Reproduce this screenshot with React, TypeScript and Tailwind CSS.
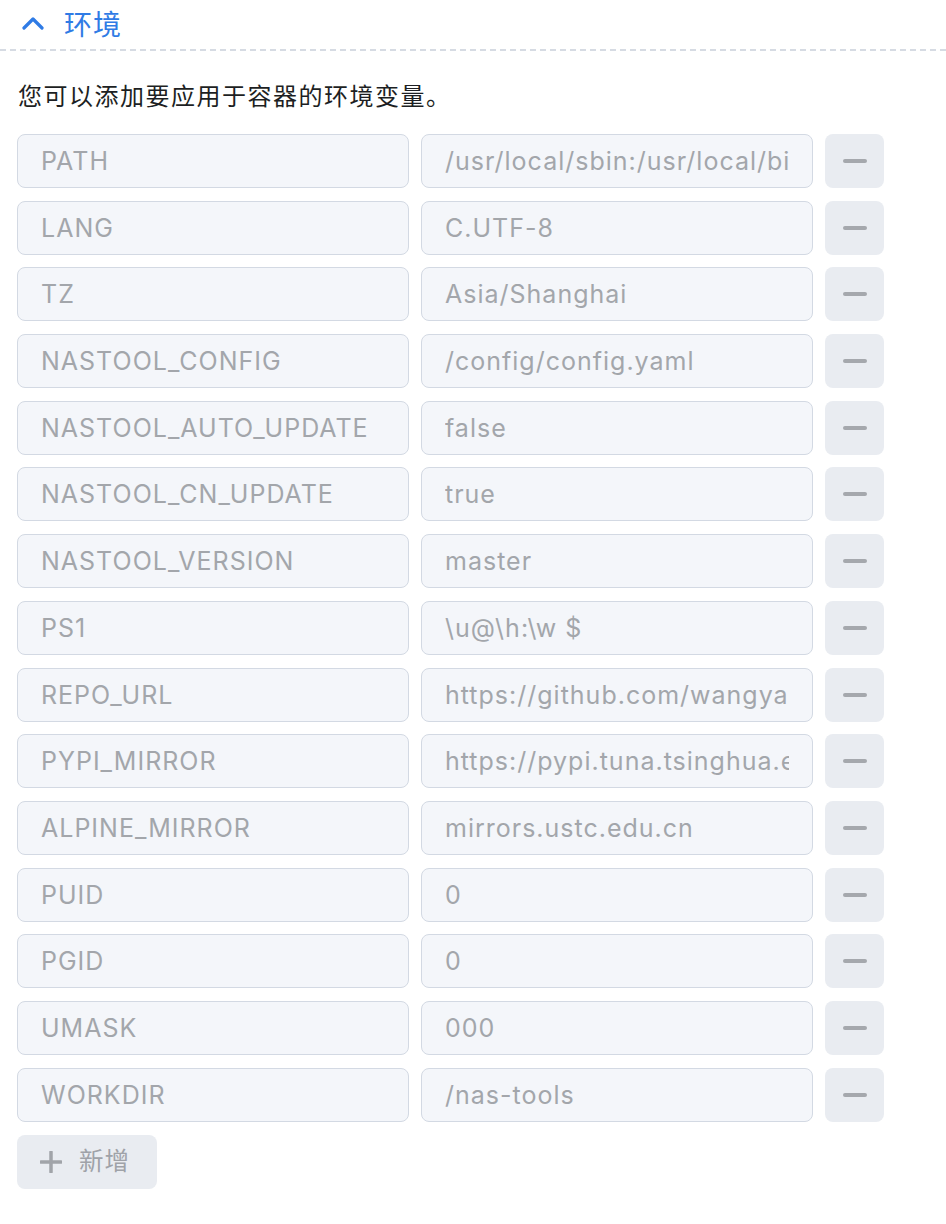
import type { FC } from 'react';

const envVars: [string, string][] = [
  ['PATH', '/usr/local/sbin:/usr/local/bin:/usr/sbin:/usr/bin:/sbin:/bin'],
  ['LANG', 'C.UTF-8'],
  ['TZ', 'Asia/Shanghai'],
  ['NASTOOL_CONFIG', '/config/config.yaml'],
  ['NASTOOL_AUTO_UPDATE', 'false'],
  ['NASTOOL_CN_UPDATE', 'true'],
  ['NASTOOL_VERSION', 'master'],
  ['PS1', '\\u@\\h:\\w $'],
  ['REPO_URL', 'https://github.com/wangyanan/nas-tools'],
  ['PYPI_MIRROR', 'https://pypi.tuna.tsinghua.edu.cn/simple'],
  ['ALPINE_MIRROR', 'mirrors.ustc.edu.cn'],
  ['PUID', '0'],
  ['PGID', '0'],
  ['UMASK', '000'],
  ['WORKDIR', '/nas-tools'],
];

const fieldClass =
  'h-[54px] w-full rounded-[8px] border border-[#d3d9e3] bg-[#f4f6fa] pl-[23px] pr-[23px] text-[25px] tracking-[1px] text-[#a3a6ab] outline-none';

const App: FC = () => {
  return (
    <div className="min-h-[1224px] w-[946px] bg-white font-['Inter','Noto_Sans_CJK_SC',sans-serif]">
      {/* Section header */}
      <div className="flex h-[49px] items-center gap-[20px] pl-[22px]">
        <svg width="22" height="14" viewBox="0 0 22 14" className="mt-[-4px]">
          <path d="M2 12 L11 3 L20 12" fill="none" stroke="#2f7be5" strokeWidth="3.2" strokeLinecap="round" strokeLinejoin="round" />
        </svg>
        <span className="text-[28px] leading-none tracking-[1px] text-[#2f7be5]">环境</span>
      </div>
      <div className="h-[2px] w-full bg-[linear-gradient(to_right,#d6dbe3_60%,transparent_60%)] bg-[length:10px_2px]" />

      <div className="pl-[17px]">
        <p className="pt-[30px] pb-[21px] pl-[1px] text-[24px] leading-[32px] tracking-[1.5px] text-[#1d1f23]">
          您可以添加要应用于容器的环境变量。
        </p>

        {/* Variables */}
        <div className="grid grid-cols-[392px_392px_59px] gap-x-[12px] gap-y-[12.7px]">
          {envVars.map(([key, value]) => (
            <div key={key} className="contents">
              <input disabled value={key} className={fieldClass} />
              <input disabled value={value} className={fieldClass} />
              <button className="flex h-[54px] w-[59px] items-center justify-center rounded-[8px] bg-[#e9ecf1]">
                <span className="block h-[4px] w-[24px] rounded-full bg-[#a5a8ad]" />
              </button>
            </div>
          ))}
        </div>

        <button className="mt-[13px] flex h-[54px] w-[140px] items-center gap-[17px] rounded-[8px] bg-[#e9ecf1] pl-[23px] text-[24.5px] tracking-[1px] text-[#9fa2a8]">
          <svg width="22" height="22" viewBox="0 0 22 22">
            <path d="M11 1 V21 M1 11 H21" stroke="#a1a4a9" strokeWidth="3.5" strokeLinecap="round" />
          </svg>
          <span>新增</span>
        </button>
      </div>
    </div>
  );
};

export default App;
